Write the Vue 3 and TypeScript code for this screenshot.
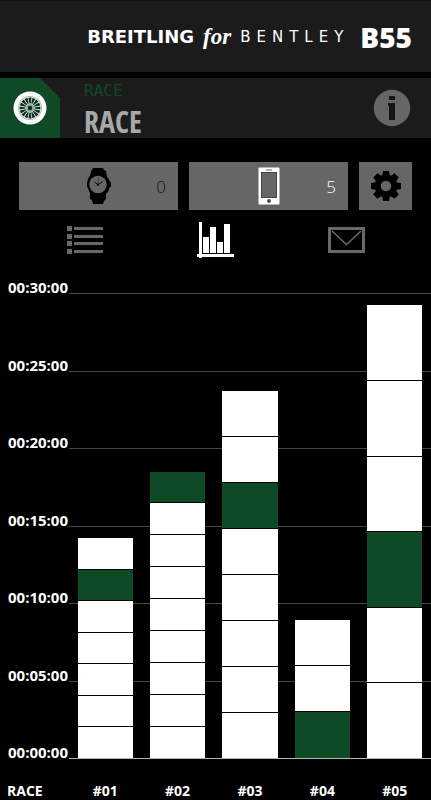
<script setup lang="ts">
interface Race {
  id: string
  laps: number[]
  best: number
}

const MAX_SECONDS = 1800

const ticks: string[] = [
  '00:30:00', '00:25:00', '00:20:00', '00:15:00', '00:10:00', '00:05:00', '00:00:00',
]

// Lap times in seconds, latest lap first; `best` is the index of the highlighted lap.
const races: Race[] = [
  { id: '#01', laps: [122, 122, 122, 122, 122, 122, 122], best: 1 },
  { id: '#02', laps: [119, 124, 124, 124, 124, 124, 124, 124, 124], best: 0 },
  { id: '#03', laps: [178, 178, 178, 178, 178, 178, 178, 180], best: 2 },
  { id: '#04', laps: [179, 179, 181], best: 2 },
  { id: '#05', laps: [293, 293, 293, 292, 293, 293], best: 3 },
]

const share = (lap: number): string => `${(lap / MAX_SECONDS) * 100}%`

const spokes: number[] = Array.from({ length: 16 }, (_, i) => i * 22.5)
const teeth: number[] = Array.from({ length: 8 }, (_, i) => i * 45)
</script>

<template>
  <div class="app">
    <header class="brand">
      <span class="breitling">BREITLING</span>
      <span class="for">for</span>
      <span class="bentley">BENTLEY</span>
      <span class="model">B55</span>
    </header>

    <section class="title-bar">
      <div class="tile">
        <svg width="34" height="34" viewBox="0 0 34 34" aria-hidden="true">
          <circle cx="17" cy="17" r="16.5" fill="#fff" />
          <circle cx="17" cy="17" r="12" fill="#9fb3a6" />
          <circle cx="17" cy="17" r="11.2" fill="#f2f5f3" />
          <g fill="#06301a">
            <path v-for="a in spokes" :key="a" d="M15.400 6.600h3.200L17.600 12.500h-1.200z" :transform="`rotate(${a} 17 17)`" />
          </g>
          <circle cx="17" cy="17" r="4" fill="#8fa697" />
          <circle cx="17" cy="17" r="2.200" fill="#06301a" />
        </svg>
      </div>
      <div class="titles">
        <span class="lcd">RACE</span>
        <h1>RACE</h1>
      </div>
      <button class="info" type="button" aria-label="Info">
        <svg width="38" height="38" viewBox="0 0 38 38" aria-hidden="true">
          <circle cx="19" cy="19" r="18.2" fill="#666" />
          <path d="M16 7h6v4h-6zM15 14h7v17h-6V17h-1z" fill="#161616" />
        </svg>
      </button>
    </section>

    <div class="sources">
      <button class="source" type="button" aria-label="Watch races">
        <span></span>
        <svg width="26" height="36" viewBox="0 0 26 36" aria-hidden="true">
          <path d="M7 0h10l1 2 2 1 1 6 1.500 1.500 1 2.500L25 14.500v4l-1.500 1L22 24l-2 2v5l-2 2-1 3H7l-1-4-2-1v-6l-1.500-3L1 18v-3.500l1.500-5L4 8l1-5 1-1z" fill="#000" />
          <circle cx="12" cy="16.500" r="8.700" fill="#666" />
          <path d="M8.500 14l3.500 2.700 4.500-3" fill="none" stroke="#000" stroke-width="1" />
          <path d="M12.300 9.500v7" stroke="#333" stroke-width=".6" />
          <circle cx="12" cy="16.800" r="1.100" fill="#000" />
        </svg>
        <span class="count">0</span>
      </button>
      <button class="source active" type="button" aria-label="Phone races">
        <span></span>
        <svg width="22" height="38" viewBox="0 0 22 38" aria-hidden="true">
          <rect x=".5" y=".5" width="21" height="37" rx="1" fill="#fff" />
          <rect x="3" y="5" width="16" height="26" fill="#444" />
          <rect x="4" y="6" width="14" height="24" fill="#666" />
          <path d="M8 3h6" stroke="#999" stroke-width="1.500" />
          <circle cx="11" cy="34" r="1.900" fill="#444" />
        </svg>
        <span class="count">5</span>
      </button>
      <button class="settings" type="button" aria-label="Settings">
        <svg width="30" height="30" viewBox="0 0 30 30" aria-hidden="true">
          <g fill="#000">
            <path v-for="a in teeth" :key="a" d="M12 0h6l1 6h-8z" :transform="`rotate(${a} 15 15)`" />
          </g>
          <circle cx="15" cy="15" r="8.300" fill="none" stroke="#000" stroke-width="6" />
        </svg>
      </button>
    </div>

    <nav class="views">
      <button type="button" aria-label="List">
        <svg width="36" height="28" viewBox="0 0 36 28" aria-hidden="true">
          <path d="M0 0h5v5H0zM0 8h5v5H0zM0 15h5v5H0zM0 23h5v5H0zM7 1h29v3H7zM7 9h29v3H7zM7 16h29v3H7zM7 24h29v3H7z" fill="#686868" />
        </svg>
      </button>
      <button type="button" aria-label="Chart">
        <svg width="37" height="36" viewBox="0 0 37 36" aria-hidden="true">
          <path d="M2 0h3v36H2zM0 32h37v3H0zM6 15h6v16H6zM13 5h6v26h-6zM20 20h6v11h-6zM27 2h6v29h-6z" fill="#fff" />
        </svg>
      </button>
      <button type="button" aria-label="Mail">
        <svg width="37" height="26" viewBox="0 0 37 26" aria-hidden="true">
          <rect x="1.500" y="1.500" width="34" height="23" fill="none" stroke="#686868" stroke-width="3" />
          <path d="M4 4l14.500 13.500L33 4" fill="none" stroke="#686868" stroke-width="1.600" />
        </svg>
      </button>
    </nav>

    <main class="chart">
      <ol class="ticks">
        <li v-for="tick in ticks" :key="tick">
          <span class="tick-label">{{ tick }}</span>
          <span class="line"></span>
        </li>
      </ol>
      <div class="bars">
        <div v-for="race in races" :key="race.id" class="bar">
          <div
            v-for="(lap, i) in race.laps"
            :key="i"
            class="lap"
            :class="{ best: i === race.best }"
            :style="{ height: share(lap) }"
          ></div>
        </div>
      </div>
    </main>

    <footer class="axis">
      <span class="axis-name">RACE</span>
      <span v-for="race in races" :key="race.id">{{ race.id }}</span>
    </footer>
  </div>
</template>

<style>
body {
  margin: 0;
  background: #000;
}
</style>

<style scoped>
.app {
  box-sizing: border-box;
  min-height: 100vh;
  display: flex;
  flex-direction: column;
  background: #000;
  color: #fff;
  font-family: "Open Sans", "Noto Sans", sans-serif;
}

button {
  margin: 0;
  padding: 0;
  border: 0;
  background: none;
  color: inherit;
  font: inherit;
}

svg {
  display: block;
}

.brand {
  box-sizing: border-box;
  height: 72px;
  padding: 0 19px;
  display: flex;
  align-items: center;
  justify-content: flex-end;
  background: #1b1b1b;
  border-top: 1px solid #111;
  white-space: nowrap;
}

.breitling {
  font: bold 18px/24px "DejaVu Sans", sans-serif;
}

.for {
  margin: 0 9px;
  font: italic bold 23px/28px "Liberation Serif", serif;
}

.bentley {
  font: 15px/24px "DejaVu Sans", sans-serif;
  letter-spacing: 6px;
}

.model {
  margin-left: 11px;
  font-size: 28px;
  font-weight: 800;
}

.title-bar {
  height: 60px;
  margin-top: 6px;
  padding-right: 20px;
  display: flex;
  align-items: center;
  background: #1b1b1b;
}

.tile {
  width: 60px;
  height: 60px;
  display: grid;
  place-items: center;
  background: #0f4a27;
  clip-path: polygon(0 0, 40px 0, 100% 20px, 100% 100%, 0 100%);
}

.titles {
  flex: 1;
  align-self: flex-start;
  padding: 3px 0 0 24px;
}

.lcd {
  display: block;
  color: #0f4a27;
  font: 16px/20px "DejaVu Sans Mono", monospace;
}

h1 {
  margin: 0;
  color: #a8a8a8;
  font: bold 30px/42px "Open Sans Condensed", "Roboto Condensed", "Liberation Sans Narrow", sans-serif;
}

.sources {
  display: grid;
  grid-template-columns: 1fr 1fr 53px;
  gap: 11px;
  margin: 24px 19px 0;
}

.source,
.settings {
  height: 48px;
  display: grid;
  align-items: center;
  justify-items: center;
  background: #666;
}

.source {
  grid-template-columns: 1fr auto 1fr;
  padding: 0 12px;
}

.count {
  justify-self: end;
  color: #111;
  font-size: 17px;
  font-weight: 300;
}

.active .count {
  color: #fff;
}

.views {
  display: grid;
  grid-template-columns: repeat(3, 1fr);
  margin: 12px 19px 0;
}

.views button {
  height: 36px;
  display: grid;
  place-items: center;
}

.chart {
  flex: 1;
  min-height: 300px;
  margin-top: 35px;
  display: grid;
}

.ticks,
.bars {
  grid-area: 1 / 1;
}

.ticks {
  margin: 0;
  padding: 0;
  list-style: none;
  display: flex;
  flex-direction: column;
  justify-content: space-between;
}

.ticks li {
  height: 1px;
  display: flex;
  align-items: flex-end;
}

.tick-label {
  box-sizing: border-box;
  width: 69px;
  padding-left: 8px;
  font-size: 15px;
  font-weight: 700;
  line-height: 14px;
}

.line {
  flex: 1;
  height: 1px;
  background: #484848;
}

.ticks li:last-child .line {
  background: #b4b4b4;
}

.bars {
  display: grid;
  grid-template-columns: repeat(5, 1fr);
  margin: 0 0 1px 69px;
}

.bar {
  display: flex;
  flex-direction: column;
  justify-content: flex-end;
  align-items: center;
}

.lap {
  box-sizing: border-box;
  width: 76%;
  background: #fff;
  border-top: 1px solid #000;
}

.lap.best {
  background: #0f4a27;
}

.axis {
  height: 41px;
  display: grid;
  grid-template-columns: 69px repeat(5, 1fr);
  align-items: end;
  text-align: center;
  font-size: 14px;
  font-weight: 700;
  line-height: 18px;
}

.axis-name {
  padding-left: 7px;
  text-align: left;
}
</style>
